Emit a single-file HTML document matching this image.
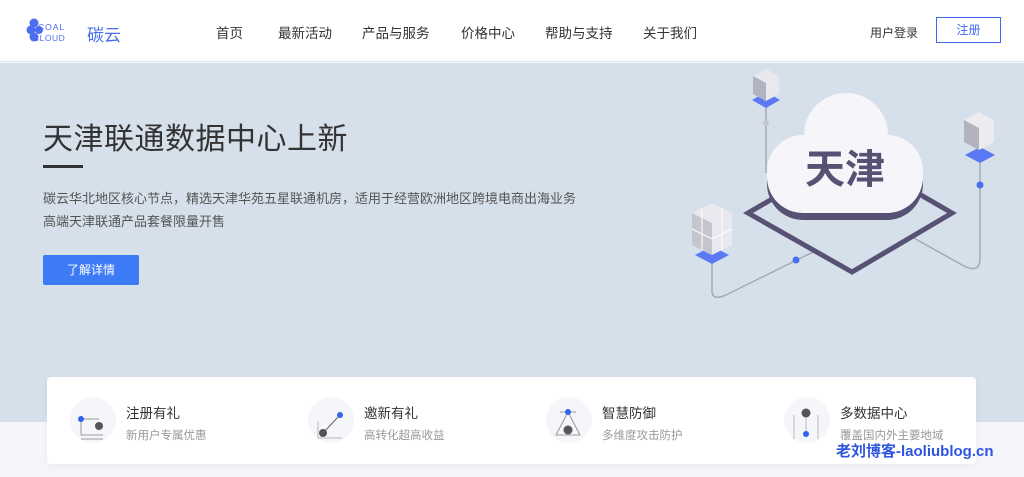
<!DOCTYPE html>
<html><head><meta charset="utf-8"><style>
*{margin:0;padding:0;box-sizing:border-box}
body{width:1024px;height:477px;overflow:hidden;font-family:"Liberation Sans","Noto Sans CJK SC",sans-serif;background:#f4f6f9;position:relative}
.hdr{position:absolute;left:0;top:0;width:1024px;height:62px;background:#fff;border-bottom:1px solid #dfe5ee}
.nav span{position:absolute;top:22px;font-size:13.5px;color:#333}
.hero{position:absolute;left:0;top:63px;width:1024px;height:359px;background:#d6e0eb}
.t{position:absolute;left:43px;top:114px;font-size:30px;color:#333;letter-spacing:0.5px}
.bar{position:absolute;left:43px;top:165px;width:40px;height:3px;background:#333}
.d{position:absolute;left:43px;font-size:13px;color:#555}
.btn{position:absolute;left:43px;top:255px;width:96px;height:30px;background:#3d7af5;color:#fff;font-size:12px;text-align:center;line-height:30px;border-radius:2px}
.card{position:absolute;left:47px;top:377px;width:929px;height:87px;background:#fff;border-radius:4px;box-shadow:0 2px 8px rgba(0,0,0,.05)}
.it{position:absolute;top:20px}
.ic{position:absolute;left:0;top:0;width:46px;height:46px;border-radius:50%;background:#f4f6f9}
.it b{position:absolute;left:56px;top:5px;font-weight:normal;font-size:13.5px;color:#333;white-space:nowrap}
.it i{position:absolute;left:56px;top:30px;font-style:normal;font-size:11.5px;color:#999;white-space:nowrap}
</style></head><body>
<div class="hdr">
<svg style="position:absolute;left:25px;top:17px" width="110" height="30"><g fill="#4b6df0"><circle cx="9" cy="6" r="4.5"/><circle cx="6" cy="13" r="4.5"/><circle cx="9" cy="20" r="4.5"/><circle cx="14" cy="13" r="4"/></g><text x="13" y="13" font-size="8.5" fill="#4b6df0" font-family="Liberation Sans" letter-spacing="1">COAL</text><text x="8" y="24" font-size="8.5" fill="#4b6df0" font-family="Liberation Sans" letter-spacing="0.5">CLOUD</text><text x="62" y="24" font-size="17" fill="#4b6df0" font-family="Noto Sans CJK SC">碳云</text></svg>
<div class="nav"><span style="left:216px">首页</span><span style="left:278px">最新活动</span><span style="left:362px">产品与服务</span><span style="left:461px">价格中心</span><span style="left:545px">帮助与支持</span><span style="left:643px">关于我们</span></div>
<span style="position:absolute;left:870px;top:24px;font-size:12px;color:#333">用户登录</span>
<div style="position:absolute;left:936px;top:17px;width:65px;height:26px;border:1px solid #3d6af0;color:#3d6af0;font-size:12px;text-align:center;line-height:24px">注册</div>
</div>
<div class="hero">
<svg style="position:absolute;left:680px;top:0" width="344" height="240">
<g fill="none" stroke="#a5a9b5" stroke-width="1.5"><path d="M86 40V110"/><path d="M300 92V195q0 16-16 8L232 174"/><path d="M32 198V228q0 10 14 4L135 188"/></g>
<path d="M68 150L172 209L272 150L170 91Z" fill="none" stroke="#575273" stroke-width="5"/>
<g fill="#575273" transform="translate(0,7)"><rect x="87" y="72" width="156" height="78" rx="36"/><circle cx="166" cy="72" r="42"/></g>
<g fill="#f6f6fa"><rect x="87" y="72" width="156" height="78" rx="36"/><circle cx="166" cy="72" r="42"/></g>
<text x="165" y="120" text-anchor="middle" font-size="40" font-weight="bold" fill="#575273" font-family="Noto Sans CJK SC">天津</text>
<g><path d="M72 37l14-8 14 8-14 8z" fill="#5b79f5"/><path d="M73 13l13-7 13 7v18l-13 7-13-7z" fill="#e8e8ee"/><path d="M73 13l13 7v18l-13-7z" fill="#b1b3be"/></g>
<g><path d="M285 92l15-8 15 8-15 8z" fill="#5b79f5"/><path d="M284 57l15-8 15 8v22l-15 8-15-8z" fill="#ebebf0"/><path d="M284 57l15 8v22l-15-8z" fill="#b1b3be"/></g>
<g><path d="M15 192l17-9 17 9-17 9z" fill="#5b79f5"/><path d="M12 150l20-10 20 10v32l-20 10-20-10z" fill="#e8e8ee"/><path d="M12 150l20 10v32l-20-10z" fill="#c4c6cf"/><path d="M22 145v42M12 166l20 10 20-10M42 145v42" stroke="#fff" fill="none"/></g>
<circle cx="300" cy="122" r="3.5" fill="#4b6df0"/><circle cx="116" cy="197" r="3.5" fill="#4b6df0"/><circle cx="86" cy="60" r="3" fill="#c4c6cf"/>
</svg>
</div>
<div class="t">天津联通数据中心上新</div>
<div class="bar"></div>
<div class="d" style="top:188px">碳云华北地区核心节点，精选天津华苑五星联通机房，适用于经营欧洲地区跨境电商出海业务</div>
<div class="d" style="top:211px">高端天津联通产品套餐限量开售</div>
<div class="btn">了解详情</div>
<div class="card">
<div class="it" style="left:23px"><div class="ic"><svg width="46" height="46"><path d="M11 22v16h22M11 42h22" stroke="#999" fill="none"/><path d="M11 22h18" stroke="#999"/><circle cx="11" cy="22" r="3" fill="#2f63f0"/><circle cx="29" cy="29" r="4" fill="#555"/></svg></div><b>注册有礼</b><i>新用户专属优惠</i></div>
<div class="it" style="left:261px"><div class="ic"><svg width="46" height="46"><path d="M10 24v17h24" stroke="#bbb" fill="none"/><path d="M15 36l17-18" stroke="#666"/><circle cx="32" cy="18" r="3" fill="#2f63f0"/><circle cx="15" cy="36" r="4" fill="#555"/></svg></div><b>邀新有礼</b><i>高转化超高收益</i></div>
<div class="it" style="left:499px"><div class="ic"><svg width="46" height="46"><path d="M22 15L10 38h24z" stroke="#999" fill="none"/><path d="M14 15h16" stroke="#999"/><circle cx="22" cy="15" r="3" fill="#2f63f0"/><circle cx="22" cy="33" r="4.5" fill="#555"/></svg></div><b>智慧防御</b><i>多维度攻击防护</i></div>
<div class="it" style="left:737px"><div class="ic"><svg width="46" height="46"><path d="M10 18v24M34 18v24M22 16v22" stroke="#bbb" fill="none"/><circle cx="22" cy="16" r="4.5" fill="#555"/><circle cx="22" cy="37" r="3" fill="#2f63f0"/></svg></div><b>多数据中心</b><i>覆盖国内外主要地域</i></div>
</div>
<div style="position:absolute;left:836px;top:440px;font-size:15px;font-weight:bold;color:#2f55e0">老刘博客-laoliublog.cn</div>
</body></html>
